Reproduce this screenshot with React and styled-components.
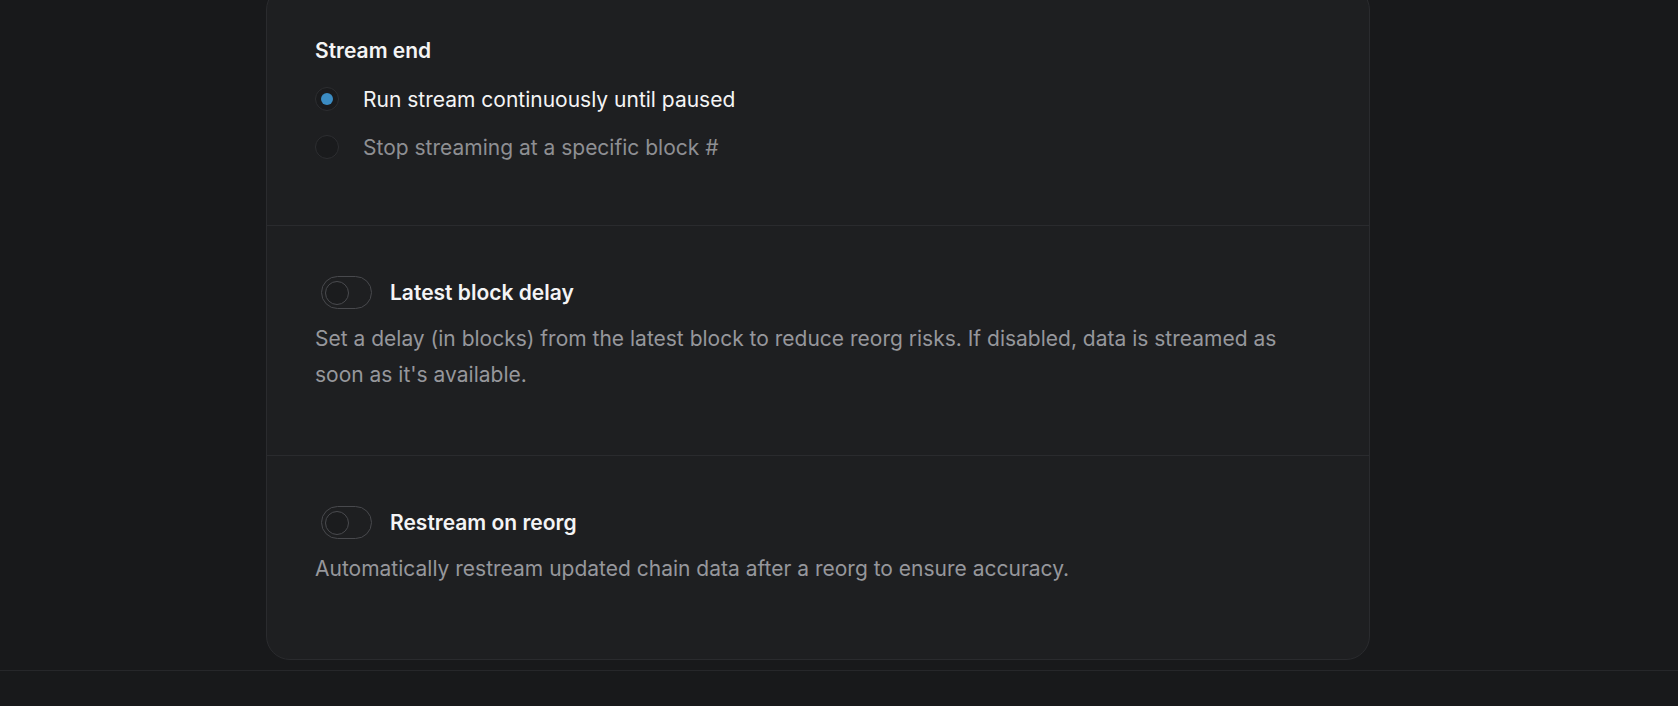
import React from "react";
import styled, { createGlobalStyle } from "styled-components";

const GlobalStyle = createGlobalStyle`
  html, body { margin: 0; padding: 0; background: #18191b; }
  body {
    font-family: Inter, "Noto Sans", "Liberation Sans", sans-serif;
    color: #f4f4f5;
    overflow: hidden;
    -webkit-font-smoothing: antialiased;
  }
  * { box-sizing: border-box; }
`;

const Page = styled.div`
  display: flex;
  flex-direction: column;
  min-height: 100vh;
`;

const Main = styled.main`
  padding-left: 266px;
  margin-top: -14px; /* page is scrolled: card top sits above the viewport */
`;

const Card = styled.div`
  width: 1104px;
  background: #1e1f21;
  border: 1px solid #2a2b2e;
  border-radius: 24px;
  padding-bottom: 10px;
`;

const Section = styled.section`
  padding: 50px 48px ${(p) => p.$padBottom || 62}px;
  & + & {
    border-top: 1px solid #2a2b2e;
  }
`;

const Heading = styled.h3`
  margin: 0;
  font-size: 21px;
  line-height: 28px;
  font-weight: 600;
  color: #f4f4f5;
`;

const RadioGroup = styled.div`
  display: flex;
  flex-direction: column;
  margin-top: 10px;
`;

const RadioRow = styled.label`
  display: flex;
  align-items: center;
  gap: 24px;
  height: 48px;
  font-size: 21px;
  color: ${(p) => (p.$checked ? "#f4f4f5" : "#8e8f93")};
  cursor: pointer;
`;

const RadioCircle = styled.span`
  width: 24px;
  height: 24px;
  border-radius: 50%;
  border: 1px solid #2d2e31;
  background: #1a1b1d;
  display: flex;
  align-items: center;
  justify-content: center;
  flex-shrink: 0;
  &::after {
    content: "";
    width: 12px;
    height: 12px;
    border-radius: 50%;
    background: ${(p) => (p.$checked ? "#3b8cc3" : "transparent")};
  }
`;

const ToggleRow = styled.div`
  display: flex;
  align-items: center;
  gap: 18px;
  padding-left: 6px;
`;

const Switch = styled.button`
  width: 51px;
  height: 33px;
  border-radius: 999px;
  border: 1px solid #48494d;
  background: transparent;
  padding: 0 0 0 3px;
  display: flex;
  align-items: center;
  cursor: pointer;
  flex-shrink: 0;
`;

const Knob = styled.span`
  width: 24px;
  height: 24px;
  border-radius: 50%;
  border: 1px solid #4a4b4f;
  background: #1b1c1e;
`;

const ToggleLabel = styled.span`
  font-size: 21px;
  font-weight: 600;
  color: #f4f4f5;
`;

const Description = styled.p`
  margin: 12px 0 0;
  font-size: 21px;
  line-height: 36px;
  color: #96979c;
`;

const Footer = styled.footer`
  margin-top: 10px;
  border-top: 1px solid #26272a;
  height: 40px;
`;

function Radio({ checked, children }) {
  return (
    <RadioRow $checked={checked}>
      <RadioCircle $checked={checked} />
      {children}
    </RadioRow>
  );
}

function ToggleSection({ title, desc, padBottom }) {
  return (
    <Section $padBottom={padBottom}>
      <ToggleRow>
        <Switch type="button" role="switch" aria-checked="false">
          <Knob />
        </Switch>
        <ToggleLabel>{title}</ToggleLabel>
      </ToggleRow>
      <Description>{desc}</Description>
    </Section>
  );
}

export default function App() {
  return (
    <Page>
      <GlobalStyle />
      <Main>
        <Card>
          <Section $padBottom={54}>
            <Heading>Stream end</Heading>
            <RadioGroup>
              <Radio checked>Run stream continuously until paused</Radio>
              <Radio>Stop streaming at a specific block #</Radio>
            </RadioGroup>
          </Section>
          <ToggleSection
            title="Latest block delay"
            desc="Set a delay (in blocks) from the latest block to reduce reorg risks. If disabled, data is streamed as soon as it's available."
          />
          <ToggleSection
            title="Restream on reorg"
            desc="Automatically restream updated chain data after a reorg to ensure accuracy."
          />
        </Card>
      </Main>
      <Footer />
    </Page>
  );
}
